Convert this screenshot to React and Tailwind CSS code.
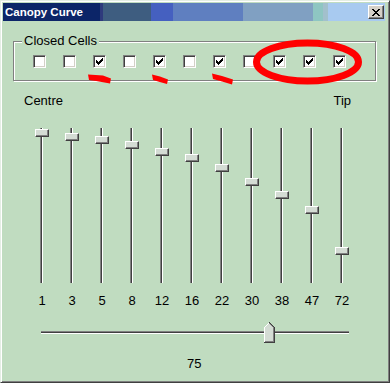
import React from "react";

const checked = [false, false, true, false, true, false, true, false, true, true, true];
const labels = ["1", "3", "5", "8", "12", "16", "22", "30", "38", "47", "72"];
const thumbTops = [1, 5, 8, 13, 20, 26, 36, 50, 63, 78, 119];

function Check() {
  const rows = [
    "......X",
    ".....XX",
    "X...XXX",
    "XX.XXX.",
    "XXXXX..",
    ".XXX...",
    "..X....",
  ];
  const rects = [];
  rows.forEach((r, y) =>
    r.split("").forEach((c, x) => {
      if (c === "X") rects.push(<rect key={x + "-" + y} x={x + 2} y={y + 2} width="1" height="1" fill="#000" />);
    })
  );
  return (
    <svg width="11" height="11" viewBox="0 0 11 11" shapeRendering="crispEdges" className="block">
      {rects}
    </svg>
  );
}

function Checkbox({ on }) {
  return (
    <div className="w-[13px] h-[13px] bg-white border border-t-[#808080] border-l-[#808080] border-b-white border-r-white shadow-[inset_1px_1px_0_#404040,inset_-1px_-1px_0_#d4d0c8]">
      {on ? <Check /> : null}
    </div>
  );
}

function VSlider({ top }) {
  return (
    <div className="relative w-[30px] h-[155px]">
      <div className="ml-[13px] w-[3px] h-[155px] bg-[#404040] border-l border-r border-l-[#808080] border-r-white" />
      <div
        className="absolute left-[8px] w-[14px] h-[8px] bg-[#d4dcd4] border border-t-white border-l-white border-b-[#404040] border-r-[#404040] shadow-[inset_-1px_-1px_0_#808080]"
        style={{ top: top + "px" }}
      />
    </div>
  );
}

export default function App() {
  return (
    <div
      className="relative w-[390px] h-[383px] bg-[#c0dcc0] border border-t-[#e4eee4] border-l-[#e4eee4] border-b-[#404040] border-r-[#404040] shadow-[inset_1px_1px_0_#ffffff,inset_-1px_-1px_0_#808080] p-[2px] overflow-hidden"
      style={{ fontFamily: '"Liberation Sans", Arial, sans-serif' }}
    >
      {/* Title bar */}
      <div className="flex h-[18px] items-center justify-between pr-[2px]">
        <div className="flex h-[18px] flex-1 items-center">
          <div className="relative flex h-[18px] w-[97px] items-center bg-[#0c2568] pl-[2px]">
            <span className="whitespace-nowrap text-[11.5px] font-bold leading-[14px] text-white">Canopy Curve</span>
          </div>
          <div className="h-[18px] w-[3px] bg-[#2e3a7c]" />
          <div className="h-[18px] w-[48px] bg-[#3e5d80]" />
          <div className="h-[18px] w-[22px] bg-[#4560c0]" />
          <div className="h-[18px] w-[70px] bg-[#5f7fc0]" />
          <div className="h-[18px] w-[70px] bg-[#80a0c2]" />
          <div className="h-[18px] w-[10px] bg-[#8ec6c2]" />
          <div className="h-[18px] w-[5px] bg-[#a2c0cc]" />
          <div className="h-[18px] flex-1 bg-[#a8caf0]" />
        </div>
        <div className="absolute right-[5px] top-[4px] flex h-[14px] w-[16px] items-center justify-center bg-[#d4d0c8] border border-t-white border-l-white border-b-[#404040] border-r-[#404040] shadow-[inset_-1px_-1px_0_#808080]">
          <svg width="8" height="7" viewBox="0 0 8 7" shapeRendering="crispEdges" className="block">
            {[0, 1, 2, 3, 4, 5, 6].map((i) => (
              <g key={i}>
                <rect x={i} y={i} width="2" height="1" fill="#000" />
                <rect x={6 - i} y={i} width="2" height="1" fill="#000" />
              </g>
            ))}
          </svg>
        </div>
      </div>

      {/* Group box */}
      <div className="relative ml-[10px] mt-[20px] h-[40px] w-[363px] border border-[#808080] shadow-[inset_1px_1px_0_#ffffff,1px_1px_0_#ffffff]">
        <div className="absolute left-[8px] top-[-9px] bg-[#c0dcc0] px-[2px] text-[13px] leading-[15px] text-black">
          Closed Cells
        </div>
        <div className="flex gap-[17px] pl-[19px] pt-[13px]">
          {checked.map((c, i) => (
            <Checkbox key={i} on={c} />
          ))}
        </div>
      </div>

      {/* Centre / Tip */}
      <div className="ml-[21px] mt-[12px] flex w-[327px] justify-between text-[13px] leading-[15px] text-black">
        <span>Centre</span>
        <span>Tip</span>
      </div>

      {/* Vertical sliders */}
      <div className="ml-[24px] mt-[20px] flex">
        {thumbTops.map((t, i) => (
          <VSlider key={i} top={t} />
        ))}
      </div>

      {/* Labels */}
      <div className="ml-[24px] mt-[10px] flex text-[13px] leading-[15px] text-black">
        {labels.map((l) => (
          <div key={l} className="w-[30px] text-center">
            {l}
          </div>
        ))}
      </div>

      {/* Horizontal slider */}
      <div className="relative ml-[38px] mt-[14px] h-[21px] w-[308px]">
        <div className="pt-[9px]">
          <div className="h-[1px] bg-[#808080]" />
          <div className="h-[1px] bg-[#404040]" />
          <div className="h-[1px] bg-white" />
        </div>
        <svg
          className="absolute left-[223px] top-0 block"
          width="11"
          height="21"
          viewBox="0 0 11 21"
          shapeRendering="crispEdges"
        >
          <polygon points="0,5 5,0 11,6 11,21 0,21" fill="#d4dcd4" />
          <rect x="0" y="5" width="1" height="15" fill="#ffffff" />
          {[0, 1, 2, 3, 4].map((i) => (
            <rect key={"w" + i} x={i} y={5 - i} width="1" height="1" fill="#ffffff" />
          ))}
          {[0, 1, 2, 3, 4, 5].map((i) => (
            <rect key={"d" + i} x={5 + i} y={i} width="1" height="1" fill="#404040" />
          ))}
          {[0, 1, 2, 3, 4].map((i) => (
            <rect key={"g" + i} x={5 + i} y={i + 1} width="1" height="1" fill="#808080" />
          ))}
          <rect x="10" y="5" width="1" height="16" fill="#404040" />
          <rect x="0" y="20" width="11" height="1" fill="#404040" />
          <rect x="9" y="6" width="1" height="14" fill="#808080" />
          <rect x="1" y="19" width="9" height="1" fill="#808080" />
        </svg>
      </div>

      {/* Value */}
      <div className="ml-[184px] mt-[13px] text-[13px] leading-[15px] text-black">75</div>

      {/* Red annotations */}
      <svg className="pointer-events-none absolute left-[-1px] top-[-1px]" width="390" height="383" viewBox="0 0 390 383">
        <polygon points="88,74.5 103,75.5 111,78.5 110,83.5 96,81 89,80" fill="#ff0000" />
        <polygon points="152,74.5 160,76.5 168,79.5 167,84 158,81.5 153,80" fill="#ff0000" />
        <polygon points="212,73.5 222,76 233,79.5 232,84.5 222,81.5 213,79" fill="#ff0000" />
        <ellipse cx="307.5" cy="62" rx="51" ry="19" fill="none" stroke="#ff0000" strokeWidth="7" />
      </svg>
    </div>
  );
}
